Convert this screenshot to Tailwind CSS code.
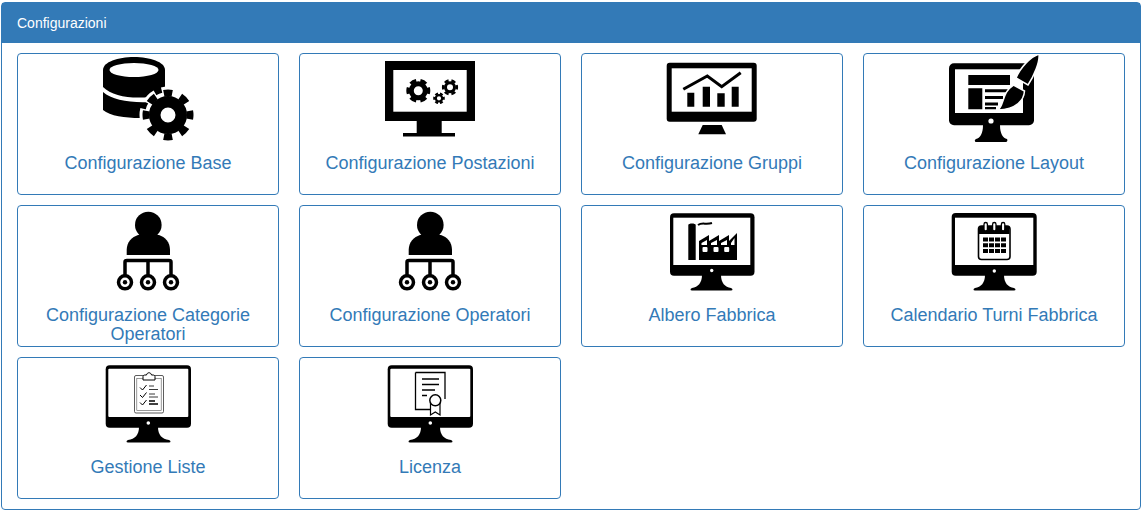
<!DOCTYPE html>
<html lang="it">
<head>
<meta charset="utf-8">
<title>Configurazioni</title>
<script src="https://cdn.jsdelivr.net/npm/@tailwindcss/browser@4"></script>
</head>
<body class="bg-white font-['Liberation_Sans',Arial,sans-serif]">
<div class="mt-[2px] ml-[1px] w-[1140px] rounded border border-[#337ab7] bg-white">
  <div class="bg-[#337ab7] px-[15px] py-[10px] text-[14px] leading-[20px] text-white">Configurazioni</div>
  <div class="grid grid-cols-[repeat(4,262px)] gap-x-[20px] gap-y-[10px] px-[15px] py-[10px]">

    <a class="flex h-[142px] flex-col items-center rounded border border-[#337ab7] text-center text-[18px] leading-[19px] text-[#337ab7]">
      <svg class="block h-[100px] w-[120px] shrink-0 blur-[0.4px]" viewBox="88 54 120 100">
        <path d="M103 70C103 62 118 57 134 57C150 57 165 62 165 70V88C165 92 160 96 150 97C130 99 112 96 103 87Z"/>
        <ellipse cx="134" cy="70" rx="24.5" ry="7" fill="#fff"/>
        <path d="M103 92C112 100 130 103 150 102V118H140C125 118 110 116 103 110Z"/>
        <g fill="none" stroke="#fff">
          <circle cx="168" cy="115" r="15" stroke-width="16"/>
          <circle cx="168" cy="115" r="23" stroke-width="11" pathLength="16" stroke-dasharray="1.3 .7" stroke-dashoffset=".65"/>
        </g>
        <g fill="none" stroke="#000">
          <circle cx="168" cy="115" r="13.250" stroke-width="11.500"/>
          <circle cx="168" cy="115" r="22" stroke-width="7" pathLength="16" stroke-dasharray="1 1" stroke-dashoffset=".5"/>
        </g>
      </svg>
      <span>Configurazione Base</span>
    </a>

    <a class="flex h-[142px] flex-col items-center rounded border border-[#337ab7] text-center text-[18px] leading-[19px] text-[#337ab7]">
      <svg class="block h-[100px] w-[120px] shrink-0 blur-[0.4px]" viewBox="370 54 120 100">
        <rect x="385" y="61" width="90" height="60"/>
        <rect x="393.3" y="70" width="73.4" height="41.7" fill="#fff"/>
        <rect x="416.7" y="121" width="25" height="12"/>
        <rect x="403" y="133" width="52" height="3.5"/>
        <g fill="none" stroke="#000">
          <circle cx="418.3" cy="90.7" r="7" stroke-width="5"/>
          <circle cx="418.3" cy="90.7" r="10" stroke-width="4" pathLength="12" stroke-dasharray="1.2 .8" stroke-dashoffset=".6"/>
          <circle cx="450" cy="87.3" r="4.500" stroke-width="3"/>
          <circle cx="450" cy="87.3" r="6.800" stroke-width="2.600" pathLength="12" stroke-dasharray="1.2 .8" stroke-dashoffset=".6"/>
          <circle cx="439" cy="98.3" r="3.200" stroke-width="2.200"/>
          <circle cx="439" cy="98.3" r="4.800" stroke-width="2" pathLength="12" stroke-dasharray="1.2 .8" stroke-dashoffset=".6"/>
        </g>
      </svg>
      <span>Configurazione Postazioni</span>
    </a>

    <a class="flex h-[142px] flex-col items-center rounded border border-[#337ab7] text-center text-[18px] leading-[19px] text-[#337ab7]">
      <svg class="block h-[100px] w-[120px] shrink-0 blur-[0.4px]" viewBox="652 54 120 100">
        <rect x="666.7" y="62.7" width="90" height="59" rx="3"/>
        <rect x="671.7" y="68.3" width="80" height="43.4" fill="#fff"/>
        <path d="M702.7 125H721.7L726 134.3H698.3Z"/>
        <path d="M687.3 92.7h7v14h-7zM702.7 86.7h7.3v20h-7.3zM717.3 93.3h7.4v13.4h-7.4zM731.7 86.7h7v20h-7z"/>
        <path d="M683.3 89.3L707.3 76L721.7 86.7L740.7 72.7" fill="none" stroke="#000" stroke-width="3"/>
      </svg>
      <span>Configurazione Gruppi</span>
    </a>

    <a class="flex h-[142px] flex-col items-center rounded border border-[#337ab7] text-center text-[18px] leading-[19px] text-[#337ab7]">
      <svg class="block h-[100px] w-[120px] shrink-0 blur-[0.4px]" viewBox="934 54 120 100">
        <rect x="949" y="63.3" width="85" height="62" rx="5"/>
        <rect x="955" y="69.3" width="68" height="43.7" fill="#fff"/>
        <circle cx="991" cy="121" r="2.6" fill="#fff"/>
        <path d="M983 125H1000C1000 134 1003 138 1007 139C1008 140 1007 142 1006 142H976C975 142 974 140 976 139C980 138 983 134 983 125Z"/>
        <path d="M968.3 75H1010V85H968.3zM968.3 88.3H982.3V109.3H968.3zM985 89.3H1008V92.3H985zM985 96H1003V99H985zM985 102.6H998V105.6H985zM985 107H996V109.3H985z"/>
        <path d="M1039 54C1040 62 1034 76 1028 85L1016 78C1020 68 1030 57 1039 54Z" stroke="#fff" stroke-width="1.5"/>
        <path d="M1013.5 85L1024.5 91C1024 100 1017 109 998 110C1004 106 1002 92 1013.5 85Z" stroke="#fff" stroke-width="1.5"/>
      </svg>
      <span>Configurazione Layout</span>
    </a>

    <a class="flex h-[142px] flex-col items-center rounded border border-[#337ab7] text-center text-[18px] leading-[19px] text-[#337ab7]">
      <svg class="block h-[100px] w-[120px] shrink-0 blur-[0.4px]" viewBox="88 206 120 100">
        <circle cx="148.3" cy="225" r="13.3"/>
        <path d="M126.7 255V250C126.7 242 132 237 138 235H159C165 237 170 242 170 250V255Z"/>
        <path d="M125 275V262C125 261 126 260.500 127 260.500H169C170 260.500 171 261 171 262V275M148 260.500V275" fill="none" stroke="#000" stroke-width="3.500"/>
        <g fill="#fff" stroke="#000" stroke-width="3.500">
          <circle cx="125" cy="282.3" r="6.500"/>
          <circle cx="148" cy="282.3" r="6.500"/>
          <circle cx="171" cy="282.3" r="6.500"/>
        </g>
        <circle cx="125" cy="282.3" r="2.200"/>
        <circle cx="148" cy="282.3" r="2.200"/>
        <circle cx="171" cy="282.3" r="2.200"/>
      </svg>
      <span>Configurazione Categorie Operatori</span>
    </a>

    <a class="flex h-[142px] flex-col items-center rounded border border-[#337ab7] text-center text-[18px] leading-[19px] text-[#337ab7]">
      <svg class="block h-[100px] w-[120px] shrink-0 blur-[0.4px]" viewBox="88 206 120 100">
        <circle cx="148.3" cy="225" r="13.3"/>
        <path d="M126.7 255V250C126.7 242 132 237 138 235H159C165 237 170 242 170 250V255Z"/>
        <path d="M125 275V262C125 261 126 260.500 127 260.500H169C170 260.500 171 261 171 262V275M148 260.500V275" fill="none" stroke="#000" stroke-width="3.500"/>
        <g fill="#fff" stroke="#000" stroke-width="3.500">
          <circle cx="125" cy="282.3" r="6.500"/>
          <circle cx="148" cy="282.3" r="6.500"/>
          <circle cx="171" cy="282.3" r="6.500"/>
        </g>
        <circle cx="125" cy="282.3" r="2.200"/>
        <circle cx="148" cy="282.3" r="2.200"/>
        <circle cx="171" cy="282.3" r="2.200"/>
      </svg>
      <span>Configurazione Operatori</span>
    </a>

    <a class="flex h-[142px] flex-col items-center rounded border border-[#337ab7] text-center text-[18px] leading-[19px] text-[#337ab7]">
      <svg class="block h-[100px] w-[120px] shrink-0 blur-[0.4px]" viewBox="652 206 120 100">
        <rect x="670" y="213.3" width="84.5" height="62.4" rx="4"/>
        <rect x="673.3" y="217.7" width="77" height="47.3" fill="#fff"/>
        <circle cx="711.7" cy="270.5" r="1.7" fill="#fff"/>
        <path d="M702 275H721C721 283 725 287 731 288C733 289 733 290.500 731 290.500H692C690 290.500 690 289 692 288C698 287 702 283 702 275Z"/>
        <path d="M688.300 225C688.300 223 695.700 223 695.700 225V260H688.300Z"/>
        <path d="M698 225C702 222 706 225 712 223" fill="none" stroke="#000" stroke-width="2"/>
        <path d="M699 260V241L709 235V241L719 235V241L729 235V241L737 233V260Z"/>
        <path d="M701.500 245V243L707 240V245ZM711 245V243L717 240V245ZM721 245V243L727 240V245ZM731 245V243L734.500 238V245Z" fill="#fff"/>
        <g fill="#fff">
          <rect x="702.500" y="247" width="5" height="5" rx="1"/>
          <rect x="713.500" y="247" width="5" height="5" rx="1"/>
          <rect x="724.200" y="247" width="5" height="5" rx="1"/>
        </g>
      </svg>
      <span>Albero Fabbrica</span>
    </a>

    <a class="flex h-[142px] flex-col items-center rounded border border-[#337ab7] text-center text-[18px] leading-[19px] text-[#337ab7]">
      <svg class="block h-[100px] w-[120px] shrink-0 blur-[0.4px]" viewBox="934 206 120 100">
        <rect x="951.700" y="213" width="85" height="62.700" rx="4"/>
        <rect x="955" y="217.700" width="78.300" height="47.300" fill="#fff"/>
        <circle cx="994.300" cy="271" r="1.700" fill="#fff"/>
        <path d="M985 275H1004C1004 283 1008 287 1014 288C1016 289 1016 290.500 1014 290.500H975C973 290.500 973 289 975 288C981 287 985 283 985 275Z"/>
        <rect x="978.500" y="226" width="31.500" height="33.500" rx="3" fill="#fff" stroke="#000" stroke-width="1.600"/>
        <path d="M979 228.500C979 227 980 226 981.500 226H1007C1008.500 226 1009.500 227 1009.500 228.500V234H979Z"/>
        <g fill="#fff" stroke="#000" stroke-width="1.300">
          <rect x="984" y="222.500" width="3.400" height="8.500" rx="1.700"/>
          <rect x="992.600" y="222.500" width="3.400" height="8.500" rx="1.700"/>
          <rect x="1001.400" y="222.500" width="3.400" height="8.500" rx="1.700"/>
        </g>
        <path d="M983 237.500h5v4h-5zM989 237.500h5v4h-5zM995 237.500h5v4h-5zM1001 237.500h5v4h-5zM983 243.300h5v4h-5zM989 243.300h5v4h-5zM995 243.300h5v4h-5zM1001 243.300h5v4h-5zM983 249.100h5v4h-5zM989 249.100h5v4h-5zM995 249.100h5v4h-5zM1001 249.100h5v4h-5z"/>
      </svg>
      <span>Calendario Turni Fabbrica</span>
    </a>

    <a class="flex h-[142px] flex-col items-center rounded border border-[#337ab7] text-center text-[18px] leading-[19px] text-[#337ab7]">
      <svg class="block h-[100px] w-[120px] shrink-0 blur-[0.4px]" viewBox="88 358 120 100">
        <rect x="105.700" y="365.300" width="85.300" height="62.400" rx="4"/>
        <rect x="108.300" y="368.700" width="80" height="48.300" rx="1" fill="#fff"/>
        <circle cx="148.300" cy="423" r="1.800" fill="#fff"/>
        <path d="M139 427H158C158 435 162 439 169 440C171 441 171 442.500 169 442.500H128C126 442.500 126 441 128 440C135 439 139 435 139 427Z"/>
        <rect x="134.500" y="375.500" width="29" height="37.500" rx="1.500" fill="#fff" stroke="#333" stroke-width=".8"/>
        <rect x="136.800" y="378.500" width="24.400" height="32" fill="none" stroke="#555" stroke-width=".6"/>
        <path d="M143 380V376.500C143 375.500 144 375 145 375H146.500C147 372 151 372 151.500 375H153C154 375 155 375.500 155 376.500V380Z" fill="#fff" stroke="#000" stroke-width="1"/>
        <path d="M140 387.500L142.500 390L146.500 385M140 395L142.500 397.500L146.500 392.500M140 402.500L142.500 405L146.500 400" fill="none" stroke="#000" stroke-width="1"/>
        <path d="M149 386H154M149 389.500H158M149 394H155M149 397H158" fill="none" stroke="#222" stroke-width=".9"/>
        <path d="M149 401H155M149 404H158" fill="none" stroke="#000" stroke-width="1.500"/>
      </svg>
      <span>Gestione Liste</span>
    </a>

    <a class="flex h-[142px] flex-col items-center rounded border border-[#337ab7] text-center text-[18px] leading-[19px] text-[#337ab7]">
      <svg class="block h-[100px] w-[120px] shrink-0 blur-[0.4px]" viewBox="370 358 120 100">
        <rect x="387.700" y="365.300" width="85.300" height="62.400" rx="4"/>
        <rect x="390.300" y="368.700" width="80" height="48.300" rx="1" fill="#fff"/>
        <circle cx="430.300" cy="423" r="1.800" fill="#fff"/>
        <path d="M421 427H440C440 435 444 439 451 440C453 441 453 442.500 451 442.500H410C408 442.500 408 441 410 440C417 439 421 435 421 427Z"/>
        <path d="M415.500 372.500H445V399M430 409.500H415.500V372.500" fill="none" stroke="#000" stroke-width="1.300"/>
        <path d="M422 379H439M422 384.500H439M422 390H435M422 395.500H427" fill="none" stroke="#000" stroke-width="1.300"/>
        <path d="M430.500 403V415L435.300 412L440 415V403" fill="#fff" stroke="#000" stroke-width="1.200"/>
        <circle cx="435.300" cy="400.300" r="5.500" fill="#fff" stroke="#000" stroke-width="1.500"/>
      </svg>
      <span>Licenza</span>
    </a>

  </div>
</div>
</body>
</html>
